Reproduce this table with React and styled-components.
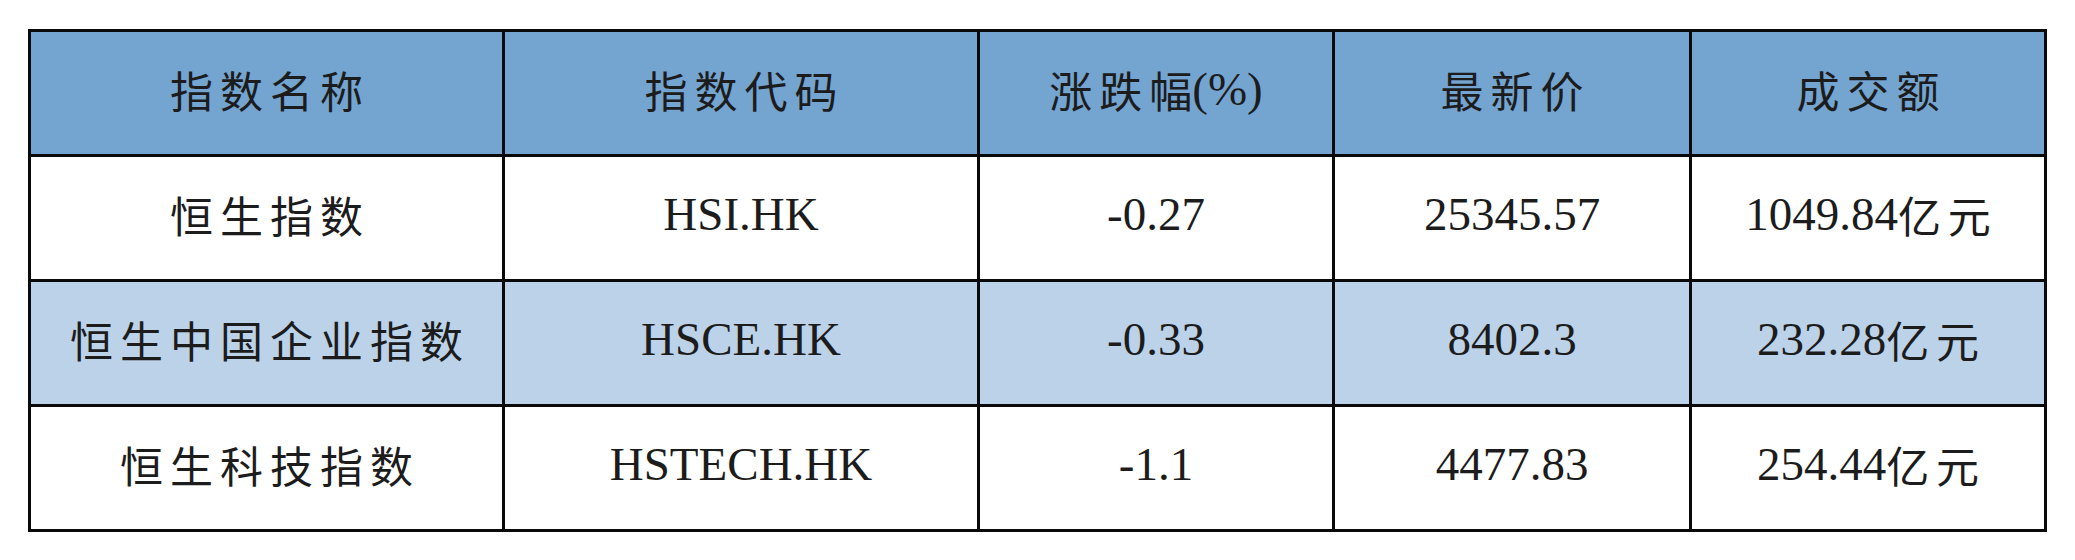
import React from 'react';
import styled, {createGlobalStyle} from "styled-components";

const GlobalStyle = createGlobalStyle`
  html, body {
    margin: 0;
    padding: 0;
    background: #ffffff;
  }
`;

const Page = styled.div`
  padding: 29px 0 0 28px;
`;

const Table = styled.div`
  display: grid;
  grid-template-columns: 471px 472px 352px 354px 352px;
  grid-auto-rows: 122px;
  gap: 3px;
  padding: 3px;
  width: max-content;
  background: #0a0a0a;
`;

const Cell = styled.div`
  display: flex;
  align-items: center;
  justify-content: center;
  padding-bottom: 8px;
  box-sizing: border-box;
  background: ${({tone}) => tone === "head" ? "#74a4d0" : tone === "light" ? "#bbd2e8" : "#ffffff"};
  color: #1c1c1c;
  font-family: "Liberation Serif", "Noto Sans CJK SC", serif;
  font-size: 47px;
  white-space: nowrap;
`;

const Han = styled.span`
  font-family: "Noto Sans CJK SC", sans-serif;
  font-size: 43px;
  letter-spacing: 7px;
  margin-right: -7px;
`;

// splits text into latin and chinese runs
const Text = ({children}) => {
    const parts = children.match(/[\u4e00-\u9fff]+|[^\u4e00-\u9fff]+/g) || [];
    return parts.map((p, i) => /[\u4e00-\u9fff]/.test(p)
        ? <Han key={i}>{p}</Han>
        : <span key={i}>{p}</span>);
};

const header = ["指数名称", "指数代码", "涨跌幅(%)", "最新价", "成交额"];

const rows = [
    ["恒生指数", "HSI.HK", "-0.27", "25345.57", "1049.84亿元"],
    ["恒生中国企业指数", "HSCE.HK", "-0.33", "8402.3", "232.28亿元"],
    ["恒生科技指数", "HSTECH.HK", "-1.1", "4477.83", "254.44亿元"],
];

function App() {
    return (
        <Page>
            <GlobalStyle/>
            <Table>
                {header.map((h, i) => <Cell key={"h" + i} tone="head"><Text>{h}</Text></Cell>)}
                {rows.map((r, ri) => r.map((c, ci) =>
                    <Cell key={ri + "-" + ci} tone={ri === 1 ? "light" : "plain"}>
                        <Text>{c}</Text>
                    </Cell>
                ))}
            </Table>
        </Page>
    );
}

export default App;
